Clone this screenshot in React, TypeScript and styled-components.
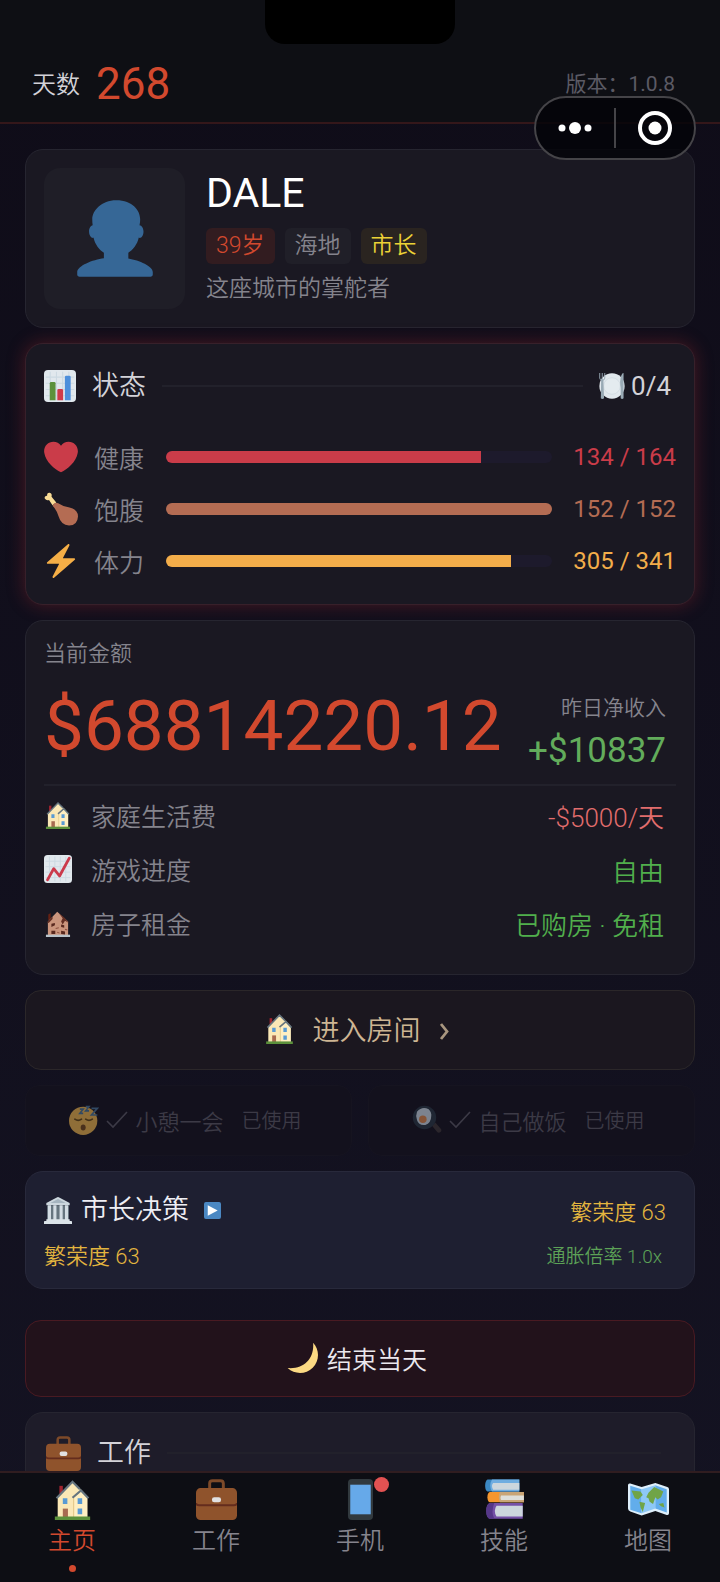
import React, { ReactNode } from "react";
import styled, { createGlobalStyle } from "styled-components";

const GlobalStyle = createGlobalStyle`
  * {
    box-sizing: border-box;
  }

  body {
    margin: 0;
    background: #100e19;
    color: #d3d2d8;
    font-family: Roboto, "Noto Sans CJK SC", sans-serif;
    font-weight: 350;
  }

  button {
    font: inherit;
    color: inherit;
    cursor: pointer;
  }
`;

const Screen = styled.div`
  position: relative;
  height: 100vh;
  display: flex;
  flex-flow: column;
  background: linear-gradient(#0f0c18, #141322);
`;

const Notch = styled.div`
  position: absolute;
  top: 0;
  left: 50%;
  width: 190px;
  height: 44px;
  margin-left: -95px;
  border-radius: 0 0 20px 20px;
  background: #000;
`;

const Header = styled.header`
  display: flex;
  justify-content: space-between;
  align-items: center;
  padding: 44px 45px 2px 32px;
  height: 124px;
  border-bottom: 2px solid #34171a;
  background: #0e0f14;
`;

const DayCount = styled.div`
  display: flex;
  align-items: center;
  gap: 16px;
  font-size: 24px;
`;

const DayNumber = styled.strong`
  padding-top: 4px;
  font-size: 44px;
  line-height: 48px;
  font-weight: 400;
  color: #d2492e;
`;

const Version = styled.span`
  font-size: 21px;
  font-weight: 400;
  color: #5b5a64;
`;

const Capsule = styled.div`
  position: absolute;
  top: 96px;
  right: 24px;
  width: 162px;
  height: 64px;
  display: flex;
  align-items: center;
  border: 2px solid #454448;
  border-radius: 32px;
  background: rgba(4, 4, 8, 0.82);
`;

const CapsuleButton = styled.button`
  flex: 1;
  display: flex;
  justify-content: center;
  padding: 0;
  border: 0;
  background: none;

  & + & {
    border-left: 2px solid #454448;
  }

  & svg {
    display: block;
  }
`;

const Main = styled.main`
  flex: 1;
  min-height: 0;
  overflow-y: auto;
  scrollbar-width: none;
  display: flex;
  flex-flow: column;
  gap: 15px;
  padding: 25px 25px 0;

  & > * {
    flex-shrink: 0;
  }
`;

const Card = styled.section<{ $glow?: boolean }>`
  padding: 18px;
  border: 1px solid ${(p) => (p.$glow ? "#37202a" : "#262530")};
  border-radius: 18px;
  background: #1a1822;
  box-shadow: ${(p) => (p.$glow ? "0 0 18px rgba(150, 40, 45, 0.42)" : "none")};
`;

const ProfileCard = styled(Card)`
  display: flex;
  align-items: center;
  gap: 21px;
`;

const Avatar = styled.div`
  display: flex;
  justify-content: center;
  align-items: center;
  width: 141px;
  height: 141px;
  border-radius: 16px;
  background: #1f1e27;
`;

const ProfileInfo = styled.div`
  display: flex;
  flex-flow: column;
  gap: 8px;
`;

const Name = styled.h1`
  margin: 0 0 6px;
  font-size: 41px;
  line-height: 42px;
  font-weight: 400;
  color: #fff;
`;

const Tags = styled.div`
  display: flex;
  gap: 10px;
`;

const Tag = styled.span<{ $color: string; $background: string }>`
  padding: 0 10px;
  border-radius: 6px;
  font-size: 23px;
  line-height: 36px;
  color: ${(p) => p.$color};
  background: ${(p) => p.$background};
`;

const Motto = styled.p`
  margin: 0;
  font-size: 23px;
  line-height: 34px;
  color: #85848d;
`;

const StatusCard = styled(Card)`
  padding-bottom: 17px;
`;

const CardHeader = styled.div`
  display: flex;
  align-items: center;
  gap: 16px;
  height: 48px;
`;

const CardTitle = styled.h2`
  margin: 0;
  font-size: 27px;
  line-height: 40px;
  font-weight: 350;
`;

const Rule = styled.div`
  flex: 1;
  height: 2px;
  background: #22212b;
`;

const Meals = styled.span`
  display: flex;
  align-items: center;
  gap: 6px;
  padding-right: 5px;
  font-size: 26px;
  font-weight: 400;
`;

const Stats = styled.div`
  padding-top: 21px;
`;

const StatRow = styled.div`
  display: grid;
  grid-template-columns: 34px 56px 1fr 108px;
  align-items: center;
  column-gap: 16px;
  height: 52px;
`;

const StatLabel = styled.span`
  font-size: 25px;
  color: #85848d;
`;

const Track = styled.div`
  height: 12px;
  border-radius: 6px;
  overflow: hidden;
  background: #1d1a2c;
`;

const Fill = styled.div<{ $color: string }>`
  height: 100%;
  background: ${(p) => p.$color};
`;

const StatValue = styled.span<{ $color: string }>`
  font-size: 24px;
  font-weight: 400;
  text-align: right;
  white-space: nowrap;
  color: ${(p) => p.$color};
`;

const MoneyCard = styled(Card)`
  padding-bottom: 24px;
`;

const MoneyLabel = styled.div`
  padding-top: 2px;
  font-size: 22px;
  line-height: 26px;
  color: #85848d;
`;

const MoneyRow = styled.div`
  display: flex;
  justify-content: space-between;
  align-items: center;
  height: 119px;
  margin-bottom: 2px;
  padding-right: 10px;
  border-bottom: 2px solid #22212b;
`;

const Balance = styled.strong`
  font-size: 71px;
  line-height: 80px;
  font-weight: 400;
  color: #d2492e;
`;

const Income = styled.div`
  display: flex;
  flex-flow: column;
  align-items: flex-end;
  padding-top: 18px;
  font-size: 21px;
  line-height: 32px;
  color: #85848d;
`;

const IncomeValue = styled.span`
  font-size: 35px;
  line-height: 54px;
  font-weight: 400;
  color: #62ac5b;
`;

const MoneyItem = styled.div`
  display: flex;
  align-items: center;
  gap: 19px;
  height: 54px;
  padding-right: 12px;
  font-size: 25px;
  color: #85848d;
`;

const ItemValue = styled.span<{ $color: string }>`
  margin-left: auto;
  font-size: 26px;
  color: ${(p) => p.$color};
`;

const EnterButton = styled.button`
  display: flex;
  justify-content: center;
  align-items: center;
  gap: 18px;
  height: 80px;
  padding: 0 6px 4px 0;
  border: 1px solid #2b2729;
  border-radius: 16px;
  font-size: 27px;
  color: #cdb593;
  background: #1b171f;
`;

const Actions = styled.div`
  display: grid;
  grid-template-columns: 1fr 1fr;
  gap: 16px;
  height: 71px;
`;

const ActionButton = styled.button`
  display: flex;
  justify-content: center;
  align-items: center;
  gap: 7px;
  padding: 0 6px 2px 0;
  border: 1px solid #161420;
  border-radius: 14px;
  font-size: 22px;
  color: #3c3a46;
  background: #13111d;
`;

const Used = styled.span`
  margin-left: 11px;
  font-size: 20px;
`;

const Dimmed = styled.span`
  display: flex;
  opacity: 0.6;
`;

const MayorCard = styled(Card)`
  border-color: #28293b;
  background: #1e1f31;
  padding: 18px 28px 14px 18px;
`;

const MayorRow = styled.div`
  display: flex;
  justify-content: space-between;
  align-items: center;
  height: 40px;
  font-size: 22px;
  color: #e3b53f;

  & + & {
    margin-top: 4px;
  }
`;

const MayorTitle = styled.h2`
  display: flex;
  align-items: center;
  gap: 9px;
  margin: 0;
  font-size: 27px;
  line-height: 40px;
  font-weight: 350;
  color: #eeeef4;
`;

const Expand = styled.span`
  display: flex;
  margin-left: 6px;
`;

const Rate = styled.span`
  padding-right: 4px;
  font-size: 19px;
  color: #5da257;
`;

const EndDayButton = styled.button`
  display: flex;
  justify-content: center;
  align-items: center;
  gap: 9px;
  height: 77px;
  margin-top: 16px;
  padding: 0 6px 2px 0;
  border: 1px solid #491a22;
  border-radius: 16px;
  font-size: 25px;
  color: #ebe8ee;
  background: #22121b;
`;

const WorkCard = styled(Card)`
  padding: 16px 33px 30px 20px;
  background: #1e1c29;
`;

const TabBar = styled.nav`
  display: grid;
  grid-template-columns: repeat(5, 1fr);
  height: 111px;
  border-top: 2px solid #301d20;
  background: #0d0e14;
`;

const Tab = styled.a<{ $active?: boolean }>`
  position: relative;
  display: flex;
  flex-flow: column;
  align-items: center;
  padding-top: 6px;
  font-size: 24px;
  line-height: 43px;
  text-decoration: none;
  color: ${(p) => (p.$active ? "#d2492e" : "#85848d")};
`;

const ActiveDot = styled.span`
  width: 7px;
  height: 7px;
  margin-top: 2px;
  border-radius: 50%;
  background: #d2492e;
`;

const Badge = styled.span`
  position: absolute;
  top: 4px;
  left: 50%;
  width: 15px;
  height: 15px;
  margin-left: 14px;
  border-radius: 50%;
  background: #e25252;
`;

type IconProps = {
  size: number;
  children: ReactNode;
};

const Icon = ({ size, children }: IconProps): JSX.Element => (
  <svg width={size} height={size} viewBox="0 0 36 36" aria-hidden="true">
    {children}
  </svg>
);

type SizeProps = {
  size: number;
};

const Person = ({ size }: SizeProps) => (
  <Icon size={size}>
    <path
      fill="#366796"
      d="M24 26.799v-2.566c2-1.348 4.080-3.779 4.703-6.896.186.103.206.170.413.170.991 0 1.709-1.287 1.709-2.873 0-1.562-.823-2.827-1.794-2.865.187-.674.293-1.577.293-2.735C29.324 5.168 26 .527 18.541.527c-6.629 0-10.777 4.641-10.777 8.507 0 1.123.069 2.043.188 2.755-.911.137-1.629 1.352-1.629 2.845 0 1.587.804 2.873 1.796 2.873.206 0 .025-.067.209-.170C8.952 20.453 11 22.885 13 24.232v2.414c-5 .645-12 3.437-12 6.230v1.061C1 35 2.076 35 3.137 35h29.725C33.924 35 35 35 35 33.938v-1.061c0-2.615-6-5.225-11-6.078z"
    />
  </Icon>
);

const PaperGrid = () => (
  <>
    <rect width="36" height="36" rx="4.500" fill="#e1e8ed" />
    <path
      stroke="#ccd9e2"
      strokeWidth="1.200"
      fill="none"
      d="M2 8h32M2 15h32M2 22h32M2 29h32M7 2v32M14 2v32M21 2v32M28 2v32"
    />
  </>
);

const BarChart = ({ size }: SizeProps) => (
  <Icon size={size}>
    <PaperGrid />
    <path fill="#5c913b" d="M6.500 34V15q0-1.500 1.500-1.500h3.500q1.500 0 1.500 1.500v19z" />
    <path fill="#cf3a4a" d="M15 34V23q0-1.500 1.500-1.500h3.500q1.500 0 1.500 1.500v11z" />
    <path fill="#4d8fdb" d="M23.500 34V8q0-1.500 1.500-1.500h3.500q1.500 0 1.500 1.500v26z" />
  </Icon>
);

const TrendChart = ({ size }: SizeProps) => (
  <Icon size={size}>
    <PaperGrid />
    <path
      d="M4.500 32L12.500 17.500L20 27L32.500 4"
      fill="none"
      stroke="#cb3a4b"
      strokeWidth="3.600"
      strokeLinecap="round"
      strokeLinejoin="round"
    />
  </Icon>
);

const Heart = ({ size }: SizeProps) => (
  <Icon size={size}>
    <path
      fill="#ca3c49"
      d="M35.885 11.833c0-5.450-4.418-9.868-9.867-9.868-3.308 0-6.227 1.633-8.018 4.129-1.791-2.496-4.710-4.129-8.017-4.129-5.450 0-9.868 4.417-9.868 9.868 0 .772.098 1.520.266 2.241C1.751 22.587 11.216 31.568 18 34.034c6.783-2.466 16.249-11.447 17.617-19.959.170-.721.268-1.469.268-2.242z"
    />
  </Icon>
);

const Drumstick = ({ size }: SizeProps) => (
  <Icon size={size}>
    <path
      d="M9 14L5.300 8.500Q2.500 9.500 .8 7Q0 4.500 3.300 4Q3 .5 6 .8Q8.800 1.200 8 5L13 11z"
      fill="#f9dc96"
    />
    <path
      d="M9 14.500Q11 10 15 12Q20 15.500 27 16.500Q36 18.500 36 26Q35.500 35.500 26.500 35.500Q18 35 15.500 26Q13.500 19 9 14.500z"
      fill="#b46c53"
    />
  </Icon>
);

const Bolt = ({ size }: SizeProps) => (
  <Icon size={size}>
    <path
      fill="#f5ae46"
      d="M32.938 15.651C32.792 15.260 32.418 15 32 15H19.925L26.890 1.458c.219-.426.106-.947-.271-1.243C26.437.071 26.218 0 26 0c-.233 0-.466.082-.653.243L18 6.588 3.347 19.243c-.316.273-.430.714-.284 1.105S3.582 21 4 21h12.075L9.110 34.542c-.219.426-.106.947.271 1.243.182.144.401.215.619.215.233 0 .466-.082.653-.243L18 29.412l14.653-12.655c.317-.273.430-.714.285-1.106z"
    />
  </Icon>
);

const Plate = ({ size }: SizeProps) => (
  <Icon size={size}>
    <circle cx="18" cy="18" r="17.500" fill="#e1e8ed" />
    <circle cx="18" cy="18" r="11.500" fill="#e4ebef" stroke="#d0dae1" />
    <path
      d="M1 0v7q0 3 3.500 3q3.500 0 3.500-3V0M4.500 0v10"
      fill="none"
      stroke="#99aab5"
      strokeWidth="1.300"
    />
    <path d="M3 9h3l1 26q-2.500 2-4.500 0zM30 35V20q-2-10 1-17q1-3 3-3v35q-2 2-4 0z" fill="#99aab5" />
  </Icon>
);

const House = ({ size }: SizeProps) => (
  <Icon size={size}>
    <path d="M6.500 6h3v8h-3z" fill="#a0242f" />
    <path d="M5 16L18 2.500L26 10L31 15.500V34H5z" fill="#fbe8b6" />
    <path d="M19 16.500L25.500 10L31 15.500V34H19z" fill="#ffefc2" />
    <path d="M19 17v17" stroke="#e4c98a" />
    <path
      d="M4 17L18 2.500L24.500 9M32 17L25.500 10L18 16.500"
      fill="none"
      stroke="#66757f"
      strokeWidth="1.900"
    />
    <path d="M9.500 17h4v5h-4zM22.500 17h4v5h-4zM22.500 26h4v5h-4z" fill="#5a9bd4" />
    <path d="M9.500 26h4.500v8H9.500z" fill="#a86b50" />
    <path d="M2.500 33h31v3h-31z" fill="#5c913b" />
  </Icon>
);

const RuinedHouse = ({ size }: SizeProps) => (
  <Icon size={size}>
    <path d="M5.500 7l3-2v9h-3z" fill="#662113" />
    <path d="M5 16L17 3.500L22 8L31 16V34H5z" fill="#cb957d" />
    <path d="M4 17L11 9.500L11 13L6 18zM19 5L26 11L32 18L27 15L24 20L22 16L24 12z" fill="#632d22" />
    <path
      d="M9.500 19l4.500-1v3l-4.500 2zM22 20l4 1v3l-4-1zM9.500 28h5v4h-5zM22 28l5 1v4l-5-1z"
      fill="#59291f"
    />
    <path d="M15 25l4-1M17 30l3 1M27 26l3 1" stroke="#8e5140" strokeWidth="1.300" />
    <path d="M2.500 33h31v3h-31z" fill="#b8c2c9" />
  </Icon>
);

const Sleeping = ({ size }: SizeProps) => (
  <Icon size={size}>
    <circle cx="17" cy="19" r="17" fill="#e2ad4b" />
    <path
      d="M7 17q4 3 8 0M20 17q4 3 8 0"
      fill="none"
      stroke="#644716"
      strokeWidth="2"
      strokeLinecap="round"
    />
    <ellipse cx="17" cy="27" rx="3" ry="3.600" fill="#6e451c" />
    <path
      d="M13 5h4l-4 5h4M20 2h4l-4 5h4M27 4h7l-7 8h7"
      fill="none"
      stroke="#466f93"
      strokeWidth="2"
    />
  </Icon>
);

const Frying = ({ size }: SizeProps) => (
  <Icon size={size}>
    <path d="M24 25l4-4 7 8q1 3-2 4-2 1-4-2z" fill="#3b3436" />
    <circle cx="15" cy="15" r="14" fill="#273542" />
    <path d="M6 8q6-7 14-3q4 4 3 9q0 7-7 10q-8 1-10-6q-2-5 0-10z" fill="#c2d0dc" />
    <circle cx="13" cy="17" r="4.500" fill="#d1814a" />
  </Icon>
);

const Check = () => (
  <svg width="22" height="18" viewBox="0 0 22 18" aria-hidden="true">
    <path d="M1 10L7 16L21 1" fill="none" stroke="currentColor" strokeWidth="1.600" />
  </svg>
);

const Chevron = () => (
  <svg width="12" height="24" viewBox="0 0 12 24" aria-hidden="true">
    <path d="M2 8L8 15.500L2 23" fill="none" stroke="#a8967f" strokeWidth="2.800" />
  </svg>
);

const Temple = ({ size }: SizeProps) => (
  <Icon size={size}>
    <path d="M3 9L17 1.500Q18 1 19 1.500L33 9V12H3z" fill="#ccd6dd" />
    <path d="M8 9L18 4L28 9z" fill="#a5b4bf" />
    <path d="M4 12h28v19H4z" fill="#66757f" />
    <path d="M5 12h4v19H5zM12 12h4v19h-4zM20 12h4v19h-4zM27 12h4v19h-4z" fill="#d3dce3" />
    <path d="M3 30h30v2h2q1 0 1 1v3H0v-3q0-1 1-1h2z" fill="#dbe3e9" />
  </Icon>
);

const Play = ({ size }: SizeProps) => (
  <Icon size={size}>
    <rect width="36" height="36" rx="4" fill="#4b88c3" />
    <path d="M8 7l21 11L8 29z" fill="#fff" />
  </Icon>
);

const Moon = ({ size }: SizeProps) => (
  <Icon size={size}>
    <path
      fill="#fcd983"
      d="M30.312.776C32 19 20 32 .776 30.312c8.199 7.717 21.091 7.588 29.107-.429C37.900 21.867 38.030 8.975 30.312.776z"
    />
  </Icon>
);

const Briefcase = ({ size }: SizeProps) => (
  <Icon size={size}>
    <path d="M12 9V4q0-2.500 2.500-2.500h7q2.500 0 2.500 2.500v5" fill="none" stroke="#7d4a29" strokeWidth="2.600" />
    <rect y="8" width="36" height="28" rx="4" fill="#8f532c" />
    <path d="M0 21q0 2 3 2h30q3 0 3-2" fill="none" stroke="#642c1d" strokeWidth="1.800" />
    <rect x="14" y="16" width="8" height="4.500" rx="2" fill="#e1e1e3" />
  </Icon>
);

const Phone = ({ size }: SizeProps) => (
  <Icon size={size}>
    <rect x="7" width="22" height="36" rx="3.500" fill="#31393e" />
    <path d="M9 5h18v26H9z" fill="#66a9e9" />
  </Icon>
);

const Books = ({ size }: SizeProps) => (
  <Icon size={size}>
    <path d="M5 21h29v14H5q-3-1-3-7t3-7z" fill="#7450a7" />
    <path d="M5 21q-3 1-3 7t3 7h4q-3-6 0-14z" fill="#553788" />
    <path d="M11 23.500h23V33H11q-3-5 0-9.500z" fill="#ccd6dd" />
    <path d="M5 11.500h30v9H5q-2-1-2-4.500t2-4.500z" fill="#f4962f" />
    <path d="M14 11.500h21v9H14q-2-4.500 0-9z" fill="#c9a576" />
    <path d="M15 14.500h20v4H15q-1-2 0-4z" fill="#dedfda" />
    <path d="M3 .5h28v10.500H3Q1 10 1 6t2-5.500z" fill="#3b88c3" />
    <path d="M7 .5h24v10.500H7Q4 6 7 .5z" fill="#70ade0" />
    <path d="M8 3.500h23V9.500H8Q6 6 8 3.500z" fill="#ccd6dd" />
  </Icon>
);

const WorldMap = ({ size }: SizeProps) => (
  <Icon size={size}>
    <path
      d="M0 5.500q0-2 2-1.500L12 7L24 3.500L34.500 7Q36 7.500 36 9V30q0 2-2 1.500L24 28L12 32L2 28.500Q0 28 0 26z"
      fill="#deeffb"
    />
    <path d="M2 6L12 9V30L2 27z" fill="#62adeb" />
    <path d="M12 9L24 5.500V26L12 30z" fill="#8dc8f6" />
    <path d="M24 5.500L34 9V29.500L24 26z" fill="#62adeb" />
    <path
      d="M3 10l8 1l2 3l-4 4l-3-1zM10 20l5 1l-2 8l-2-4zM18 12l5-5l8 4l-2 5l-3 2l-2-2l-2 6l-3-2l-1-3l-2-1zM27 22l4-1l1 4l-3-1z"
      fill="#70a447"
    />
  </Icon>
);

const stats = [
  { label: "健康", value: 134, max: 164, color: "#ca3c49", icon: <Heart size={34} /> },
  { label: "饱腹", value: 152, max: 152, color: "#b46c53", icon: <Drumstick size={34} /> },
  { label: "体力", value: 305, max: 341, color: "#f3ad4a", icon: <Bolt size={34} /> },
];

const expenses = [
  { label: "家庭生活费", value: "-$5000/天", color: "#e26d6d", icon: <House size={28} /> },
  { label: "游戏进度", value: "自由", color: "#51af4c", icon: <TrendChart size={28} /> },
  { label: "房子租金", value: "已购房 · 免租", color: "#51af4c", icon: <RuinedHouse size={28} /> },
];

const tabs = [
  { label: "主页", icon: <House size={41} />, active: true },
  { label: "工作", icon: <Briefcase size={41} /> },
  { label: "手机", icon: <Phone size={41} />, badge: true },
  { label: "技能", icon: <Books size={41} /> },
  { label: "地图", icon: <WorldMap size={41} /> },
];

const App = (): JSX.Element => (
  <Screen>
    <GlobalStyle />
    <Header>
      <DayCount>
        天数 <DayNumber>268</DayNumber>
      </DayCount>
      <Version>版本：1.0.8</Version>
    </Header>
    <Notch />

    <Main>
      <ProfileCard>
        <Avatar>
          <Person size={80} />
        </Avatar>
        <ProfileInfo>
          <Name>DALE</Name>
          <Tags>
            <Tag $color="#d2492e" $background="#321c20">39岁</Tag>
            <Tag $color="#85848d" $background="#201f28">海地</Tag>
            <Tag $color="#ecd236" $background="#2a2420">市长</Tag>
          </Tags>
          <Motto>这座城市的掌舵者</Motto>
        </ProfileInfo>
      </ProfileCard>

      <StatusCard $glow>
        <CardHeader>
          <BarChart size={32} />
          <CardTitle>状态</CardTitle>
          <Rule />
          <Meals>
            <Plate size={26} />
            0/4
          </Meals>
        </CardHeader>
        <Stats>
          {stats.map((s) => (
            <StatRow key={s.label}>
              {s.icon}
              <StatLabel>{s.label}</StatLabel>
              <Track>
                <Fill $color={s.color} style={{ width: `${(s.value / s.max) * 100}%` }} />
              </Track>
              <StatValue $color={s.color}>
                {s.value} / {s.max}
              </StatValue>
            </StatRow>
          ))}
        </Stats>
      </StatusCard>

      <MoneyCard>
        <MoneyLabel>当前金额</MoneyLabel>
        <MoneyRow>
          <Balance>$68814220.12</Balance>
          <Income>
            昨日净收入
            <IncomeValue>+$10837</IncomeValue>
          </Income>
        </MoneyRow>
        {expenses.map((e) => (
          <MoneyItem key={e.label}>
            {e.icon}
            {e.label}
            <ItemValue $color={e.color}>{e.value}</ItemValue>
          </MoneyItem>
        ))}
      </MoneyCard>

      <EnterButton>
        <House size={31} />
        进入房间
        <Chevron />
      </EnterButton>

      <Actions>
        <ActionButton disabled>
          <Dimmed>
            <Sleeping size={30} />
          </Dimmed>
          <Check />
          小憩一会
          <Used>已使用</Used>
        </ActionButton>
        <ActionButton disabled>
          <Dimmed>
            <Frying size={30} />
          </Dimmed>
          <Check />
          自己做饭
          <Used>已使用</Used>
        </ActionButton>
      </Actions>

      <MayorCard>
        <MayorRow>
          <MayorTitle>
            <Temple size={28} />
            市长决策
            <Expand>
              <Play size={17} />
            </Expand>
          </MayorTitle>
          <span>繁荣度 63</span>
        </MayorRow>
        <MayorRow>
          <span>繁荣度 63</span>
          <Rate>通胀倍率 1.0x</Rate>
        </MayorRow>
      </MayorCard>

      <EndDayButton>
        <Moon size={31} />
        结束当天
      </EndDayButton>

      <WorkCard>
        <CardHeader>
          <Briefcase size={35} />
          <CardTitle>工作</CardTitle>
          <Rule />
        </CardHeader>
      </WorkCard>
    </Main>

    <TabBar>
      {tabs.map((t) => (
        <Tab key={t.label} href="#" $active={t.active}>
          {t.icon}
          {t.label}
          {t.badge && <Badge />}
          {t.active && <ActiveDot />}
        </Tab>
      ))}
    </TabBar>

    <Capsule>
      <CapsuleButton aria-label="更多">
        <svg width="36" height="14" viewBox="0 0 36 14">
          <circle cx="5" cy="7" r="3.500" fill="#fff" />
          <circle cx="18" cy="7" r="6" fill="#fff" />
          <circle cx="31" cy="7" r="3.500" fill="#fff" />
        </svg>
      </CapsuleButton>
      <CapsuleButton aria-label="关闭">
        <svg width="34" height="40" viewBox="0 0 34 40">
          <circle cx="17" cy="20" r="15" fill="none" stroke="#fff" strokeWidth="4" />
          <circle cx="17" cy="20" r="6.500" fill="#fff" />
        </svg>
      </CapsuleButton>
    </Capsule>
  </Screen>
);

export default App;
